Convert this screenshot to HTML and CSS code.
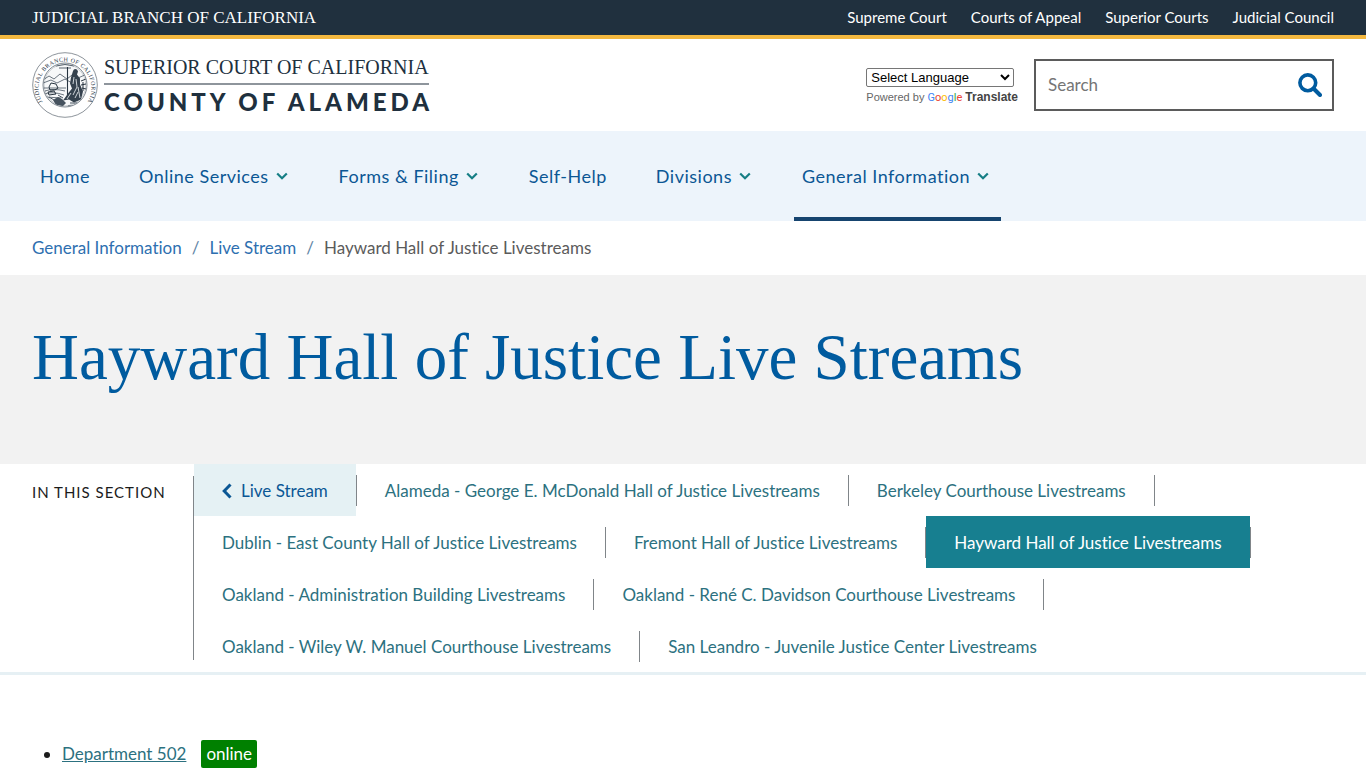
FILE: index.html
```html
<!DOCTYPE html>
<html lang="en">
<head>
<meta charset="utf-8">
<meta name="viewport" content="width=device-width, initial-scale=1">
<title>Hayward Hall of Justice Live Streams</title>
<link rel="stylesheet" href="styles.css">
</head>
<body>
<svg class="sprite" aria-hidden="true">
  <symbol id="chevron" viewBox="0 0 12 8"><path d="M1.2 1.5 6 6.2l4.800-4.700" fill="none" stroke="currentColor" stroke-width="2.200"/></symbol>
</svg>
<div class="topbar">
  <a class="branch" href="#">JUDICIAL BRANCH OF CALIFORNIA</a>
  <nav class="toplinks" aria-label="Judicial branch">
    <a href="#">Supreme Court</a><a href="#">Courts of Appeal</a><a href="#">Superior Courts</a><a href="#">Judicial Council</a>
  </nav>
</div>
<header class="header">
  <a class="logo" href="#">
    <svg class="seal" viewBox="0 0 66 66" aria-hidden="true">
      <defs><path id="arc" d="M13.500 54A26.500 26.500 0 1 1 52.500 54"/><clipPath id="disc"><circle cx="33" cy="33" r="21.500"/></clipPath></defs>
      <circle cx="33" cy="33" r="32.300" fill="#fff" stroke="#5b6670" stroke-width=".7"/>
      <text class="sealtext"><textPath href="#arc" startOffset="50%" text-anchor="middle">JUDICIAL BRANCH OF CALIFORNIA</textPath></text>
      <circle cx="33" cy="33" r="22" fill="#f7f8f9" stroke="#46535f" stroke-width=".7"/>
      <circle cx="33" cy="33" r="20.800" fill="none" stroke="#8d959d" stroke-width=".4"/>
      <g clip-path="url(#disc)">
        <path d="M11 28l6-4 5 3 6-5 7 5 5-4 6 3 9-4M11 31l8-3 6 3 8-4 7 4M12 36h22M13 39q8-3 20 0M12 42q9-3 20 1M14 45l15 1" fill="none" stroke="#46535f" stroke-width=".8"/>
        <path d="M24 14q9-3 18 0M27 16h12" fill="none" stroke="#46535f" stroke-width=".9"/>
        <path d="M17 35l2-4 5 1 2 4-3 2h-5zM16 40l6-1 2 3-7 1z" fill="none" stroke="#26333f"/>
        <path d="M35.500 15v29" stroke="#26333f" stroke-width="1.100"/>
        <path d="M41 19q1-3 4-1.500l1 2-1 3 3 4 0 6 3 7-2 8-7 3-5-3-6 1 5-7 4-5-2-5 1-6z" fill="#35424e"/>
        <path d="M42 25l-1 7M44 27l1 8-4 8M39 41l-4 6M46 35l2 11M43 46l3-6" fill="none" stroke="#dfe4e8" stroke-width=".9"/>
        <path d="M49 29l5-2M49 33l5-1M50 36l4 1M51 30v9" fill="none" stroke="#26333f"/>
        <path d="M21 48l5-3 4 2 4 4-3 3-7-1z" fill="#46535f"/>
        <path d="M38 51h12M36 54l11-1M17 45l5 3M26 43l5 3" stroke="#46535f"/>
      </g>
    </svg>
    <span class="wordmark"><span class="court">SUPERIOR COURT OF CALIFORNIA</span><span class="county">COUNTY OF ALAMEDA</span></span>
  </a>
  <div class="tools">
    <div class="translate">
      <select class="language" aria-label="Select Language"><option>Select Language</option></select>
      <div class="powered">Powered by <a href="#"><span class="google"><span class="b">G</span><span class="r">o</span><span class="y">o</span><span class="b">g</span><span class="g">l</span><span class="r">e</span></span> <strong>Translate</strong></a></div>
    </div>
    <form class="search">
      <input type="search" placeholder="Search" aria-label="Search">
      <button type="button" aria-label="Search"><svg viewBox="0 0 24 24"><circle cx="9.800" cy="9.800" r="7.900" fill="none" stroke="currentColor" stroke-width="3.600"/><path d="M15.500 15.500l6.500 6.500" stroke="currentColor" stroke-width="4" stroke-linecap="round"/></svg></button>
    </form>
  </div>
</header>
<nav class="mainnav" aria-label="Main">
  <a href="#">Home</a>
  <a href="#">Online Services<svg><use href="#chevron"/></svg></a>
  <a href="#">Forms &amp; Filing<svg><use href="#chevron"/></svg></a>
  <a href="#">Self-Help</a>
  <a href="#">Divisions<svg><use href="#chevron"/></svg></a>
  <a class="active" href="#">General Information<svg><use href="#chevron"/></svg></a>
</nav>
<nav class="crumbs" aria-label="Breadcrumb">
  <a href="#">General Information</a><span class="sep">/</span><a href="#">Live Stream</a><span class="sep">/</span><span>Hayward Hall of Justice Livestreams</span>
</nav>
<main>
  <div class="hero"><h1>Hayward Hall of Justice Live Streams</h1></div>
  <div class="section">
    <h2>IN THIS SECTION</h2>
    <ul class="links">
      <li><a class="parent" href="#"><svg viewBox="0 0 10 16"><path d="M8.500 1.500 2.200 8l6.300 6.500" fill="none" stroke="currentColor" stroke-width="3"/></svg>Live Stream</a></li>
      <li><a href="#">Alameda - George E. McDonald Hall of Justice Livestreams</a></li>
      <li><a href="#">Berkeley Courthouse Livestreams</a></li>
      <li><a href="#">Dublin - East County Hall of Justice Livestreams</a></li>
      <li><a href="#">Fremont Hall of Justice Livestreams</a></li>
      <li><a class="current" href="#">Hayward Hall of Justice Livestreams</a></li>
      <li><a href="#">Oakland - Administration Building Livestreams</a></li>
      <li><a href="#">Oakland - René C. Davidson Courthouse Livestreams</a></li>
      <li><a href="#">Oakland - Wiley W. Manuel Courthouse Livestreams</a></li>
      <li><a href="#">San Leandro - Juvenile Justice Center Livestreams</a></li>
    </ul>
  </div>
  <ul class="departments"><li><a href="#">Department 502</a><span class="status">online</span></li></ul>
</main>
</body>
</html>
```
FILE: styles.css
```css
* { box-sizing: border-box; }
body { margin: 0; background: #fff; color: #1b1b1b; font: 17px/28px Lato, sans-serif; font-variant-ligatures: none; }
a { color: inherit; text-decoration: none; }
ul { margin: 0; }
.sprite { display: none; }

.topbar { display: flex; justify-content: space-between; align-items: center; height: 39px; padding: 0 32px; background: #20303e; border-bottom: 4px solid #f3b83f; color: #fff; }
.branch { font: 17px/24px "Liberation Serif", serif; }
.toplinks { display: flex; gap: 24px; padding-bottom: 2px; font-size: 15px; line-height: 24px; }

.header { display: flex; justify-content: space-between; align-items: center; height: 92px; padding: 0 32px; }
.logo { display: flex; align-items: center; gap: 6px; color: #20303e; }
.seal { width: 66px; height: 66px; }
.sealtext { font: 6px "Liberation Serif", serif; fill: #26333f; letter-spacing: 0.4px; }
.wordmark { display: flex; flex-direction: column; }
.court { padding-bottom: 4px; border-bottom: 2px solid #8e959c; font: 20px/24px "Liberation Serif", serif; }
.county { padding-top: 4px; font-size: 24px; font-weight: 900; line-height: 26px; letter-spacing: 4px; margin-right: -4px; }
.tools { display: flex; align-items: center; gap: 16px; }
.translate { padding-top: 4px; color: #666; font: 11px/16px "Liberation Sans", Arial, sans-serif; }
.language { display: block; width: 148px; height: 19px; margin-bottom: 2px; padding: 0; border: 1px solid #767676; border-radius: 2px; background: #fff; color: #000; font: 13px "Liberation Sans", Arial, sans-serif; }
.powered { white-space: nowrap; }
.powered strong { color: #444; font-size: 12px; }
.google { font: 11px/16px Roboto, sans-serif; }
.b { color: #4285f4; } .r { color: #ea4335; } .y { color: #fbbc05; } .g { color: #34a853; }
.search { display: flex; align-items: center; width: 300px; height: 52px; border: 2px solid #5b5b5b; }
.search input { flex: 1; min-width: 0; padding: 0 12px 2px; border: 0; outline: 0; background: none; font: 17px Lato, sans-serif; }
.search input::placeholder { color: #757575; }
.search button { padding: 0 10px; border: 0; background: none; color: #005b9f; }
.search svg { display: block; width: 24px; height: 24px; }

.mainnav { display: flex; gap: 31px; height: 90px; padding: 0 32px; background: #edf4fb; color: #0b5794; font-size: 18px; letter-spacing: 0.5px; }
.mainnav a { display: flex; align-items: center; padding: 4px 10px 0 8px; border-bottom: 4px solid transparent; }
.mainnav .active { border-color: #16446f; }
.mainnav svg { width: 12px; height: 8px; margin: 0 2px 0 7px; color: #167e85; }
.crumbs { display: flex; height: 54px; padding: 0 32px; align-items: center; color: #5b5b5b; }
.crumbs a { color: #2e6fb0; }
.sep { padding: 0 10px; color: #6083a5; }

.hero { min-height: 189px; padding: 46px 32px; background: #f2f2f2; }
h1 { margin: 0; color: #005b9f; font: 65px/72px "Liberation Serif", serif; }
.section { display: flex; padding: 0 32px; border-bottom: 3px solid #e6f0f4; }
h2 { flex: none; width: 162px; margin: 12px 0; padding-top: 4px; border-right: 1px solid #808589; font-size: 15px; font-weight: 400; line-height: 24px; letter-spacing: 1px; }
.links { flex: 1; display: flex; flex-wrap: wrap; padding: 0; list-style: none; color: #2c7180; }
.links li { display: flex; align-items: center; }
.links li::after { content: ""; height: 31px; border-right: 1px solid #808589; }
.links li:last-child::after { display: none; }
.links a { display: flex; align-items: center; gap: 9px; height: 52px; padding: 2px 28px 0; }
.links svg { width: 10px; height: 16px; }
.links .parent { background: #e5f1f4; color: #0b5794; }
.links .current { background: #177f90; color: #fff; }
.departments { padding: 65px 32px 0 62px; }
.departments a { color: #2c7180; text-decoration: underline; }
.status { display: inline-block; margin-left: 15px; padding: 0 5px; border-radius: 2px; background: #008000; color: #fff; }
```
